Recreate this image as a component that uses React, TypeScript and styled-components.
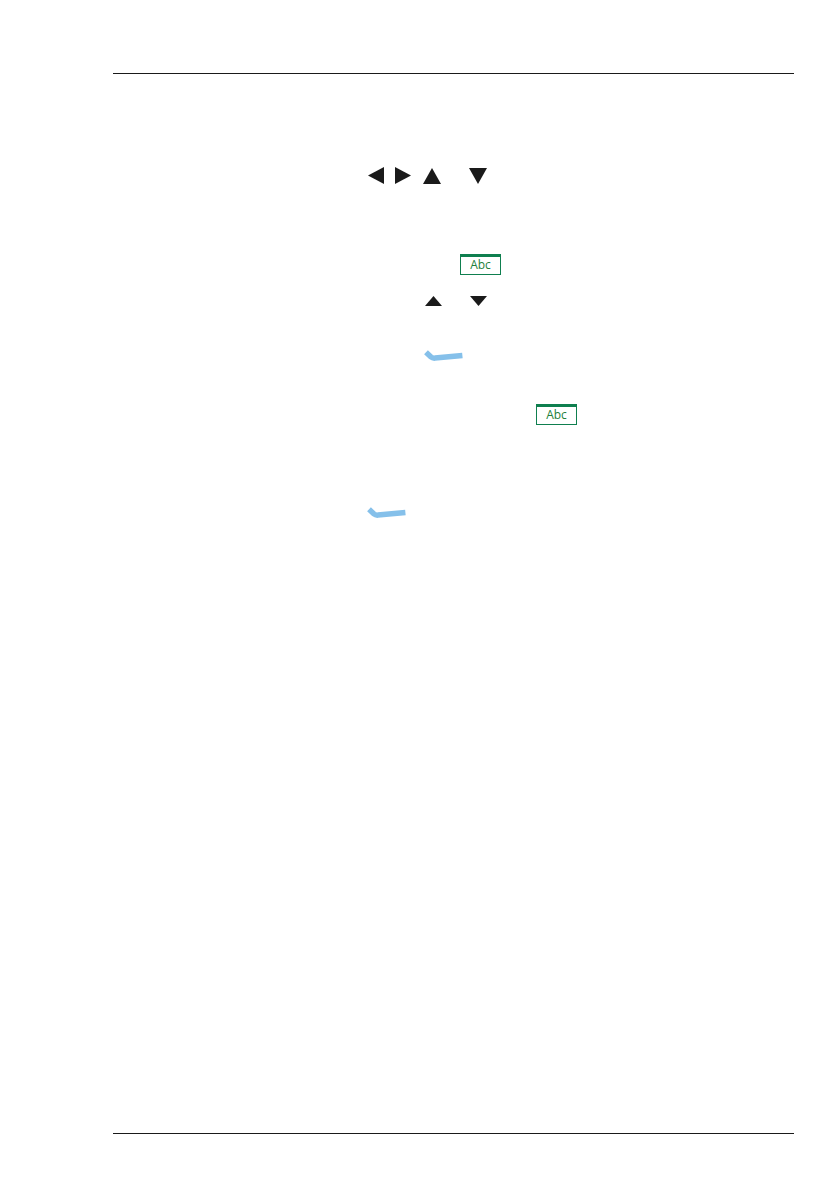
import React from 'react';
import styled, { createGlobalStyle } from 'styled-components';

const GlobalStyle = createGlobalStyle`
  html, body {
    margin: 0;
    padding: 0;
    background: #ffffff;
    font-family: "Open Sans", "Liberation Sans", sans-serif;
  }
`;

const Page = styled.div`
  width: 681px;
  height: 1190px;
  margin-left: 113px;
  padding: 73px 0 56px;
  box-sizing: border-box;
  display: flex;
  flex-direction: column;
`;

const Rule = styled.hr`
  width: 100%;
  height: 1px;
  margin: 0;
  border: none;
  background: #1a1a1a;
  flex: none;
`;

const Content = styled.main`
  flex: 1;
  display: flex;
  flex-direction: column;
`;

const Line = styled.div<{ $top: number; $indent: number }>`
  display: flex;
  align-items: center;
  margin-top: ${({ $top }) => $top}px;
  padding-left: ${({ $indent }) => $indent}px;
`;

const KeyBadge = styled.span`
  width: 41px;
  height: 21px;
  box-sizing: border-box;
  padding-bottom: 1px;
  display: flex;
  align-items: center;
  justify-content: center;
  border: 1px solid #0f7f4f;
  border-top-width: 3px;
  color: #23803c;
  font-size: 12px;
  line-height: 1;
`;

const Arrow = styled.svg<{ $left?: number }>`
  display: block;
  flex: none;
  margin-left: ${({ $left }) => $left ?? 0}px;
  fill: #1a1a1a;
`;

const Stroke = styled.svg`
  display: block;
  overflow: visible;
  fill: none;
  stroke: #85c0ea;
  stroke-width: 5.5;
  stroke-linejoin: round;
`;

const BlueMark = () => (
  <Stroke width="39" height="11" viewBox="0 0 39 11">
    <path d="M2 2.3 L7 7 Q8.5 8.3 11 8.1 L38.4 5.4" />
  </Stroke>
);

const App: React.FC = () => (
  <>
    <GlobalStyle />
    <Page>
      <Rule />
      <Content>
        <Line $top={93} $indent={255}>
          <Arrow width="16" height="17" viewBox="0 0 16 17">
            <path d="M16 0V17L0 8.5Z" />
          </Arrow>
          <Arrow $left={11} width="16" height="17" viewBox="0 0 16 17">
            <path d="M0 0V17L16 8.5Z" />
          </Arrow>
          <Arrow $left={12} width="18" height="16" viewBox="0 0 18 16">
            <path d="M9 0L18 16H0Z" />
          </Arrow>
          <Arrow $left={28} width="18" height="16" viewBox="0 0 18 16">
            <path d="M0 0H18L9 16Z" />
          </Arrow>
        </Line>
        <Line $top={70} $indent={347}>
          <KeyBadge>Abc</KeyBadge>
        </Line>
        <Line $top={21} $indent={312}>
          <Arrow width="17" height="10" viewBox="0 0 17 10">
            <path d="M8.5 0L17 10H0Z" />
          </Arrow>
          <Arrow $left={28} width="17" height="10" viewBox="0 0 17 10">
            <path d="M0 0H17L8.5 10Z" />
          </Arrow>
        </Line>
        <Line $top={44} $indent={311}>
          <BlueMark />
        </Line>
        <Line $top={43} $indent={423}>
          <KeyBadge>Abc</KeyBadge>
        </Line>
        <Line $top={82} $indent={254}>
          <BlueMark />
        </Line>
      </Content>
      <Rule />
    </Page>
  </>
);

export default App;
